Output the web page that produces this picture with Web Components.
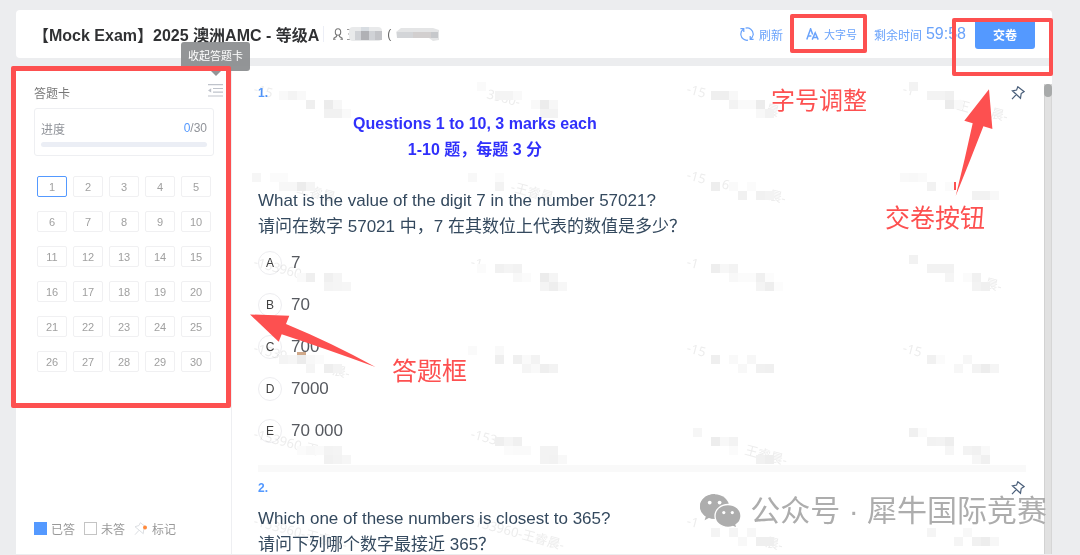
<!DOCTYPE html>
<html lang="zh-CN">
<head>
<meta charset="utf-8">
<title>Mock Exam</title>
<style>
    html, body {
        margin: 0;
        height: 100%;
    }

    body {
        position: relative;
        overflow: hidden;
        background-color: #ecedef;
        font-family: "Liberation Sans", "Noto Sans CJK SC", sans-serif;
        font-size: 12px;
        --blue: #5499ff;
        --red: #fd5050;
        --line: #eeeff2;
    }
</style>
</head>
<body>
<exam-app></exam-app>
<water-mark></water-mark>
<note-layer></note-layer>

<script>
class ExamHeader extends HTMLElement {
    constructor() {
        super()
        this.attachShadow({ mode: 'open' })
    }

    connectedCallback() {
        this.shadowRoot.innerHTML = `
            <style>
                :host {
                    display: flex;
                    align-items: center;
                    flex: none;
                    height: 48px;
                    padding: 0 17px;
                    box-sizing: border-box;
                    background-color: #fff;
                    border-radius: 4px;
                    white-space: nowrap;
                }

                h1 {
                    margin: 0;
                    font-size: 16px;
                    color: #303133;
                }

                .divider {
                    width: 1px;
                    height: 12px;
                    background-color: #e6e9f0;
                }

                .user {
                    display: flex;
                    align-items: center;
                    gap: 4px;
                    margin-left: 4px;
                    padding-left: 9px;
                    border-left: 1px solid #eceef6;
                    color: #666;
                }

                .tools {
                    display: flex;
                    align-items: center;
                    gap: 9px;
                    margin-left: auto;
                    color: #6aa3fb;
                }

                button {
                    display: flex;
                    align-items: center;
                    gap: 5px;
                    padding: 0;
                    border: none;
                    background: none;
                    color: inherit;
                    font: inherit;
                    cursor: pointer;
                }

                .size {
                    margin: 0 8px 0 4px;
                    font-size: 11px;
                }

                .time {
                    display: flex;
                    align-items: center;
                    gap: 4px;
                }

                .time b {
                    font-size: 16px;
                    font-weight: 400;
                }

                .submit {
                    justify-content: center;
                    width: 60px;
                    height: 30px;
                    border-radius: 3px;
                    background-color: var(--blue);
                    color: #fff;
                    font-weight: 700;
                }
            </style>
            <h1>【Mock Exam】2025 澳洲AMC - 等级A</h1>
            <div class="user">
                <svg width="10" height="12" viewBox="0 0 10 12" fill="none" stroke="#777" stroke-width="1.1">
                    <ellipse cx="5" cy="4" rx="2.7" ry="3.3"/>
                    <path d="M3.7 7.2 3.5 8.6 1 10V11.2M6.3 7.2 6.5 8.6 9 10V11.2M0 11.3H2.6M7.4 11.3H10"/>
                </svg>
                <svg width="36" height="14" viewBox="0 0 36 14">
                    <path d="M0 2.5H4M1 7H4M0 12.5H4" stroke="#999"/>
                    <rect x="2" width="33" height="14" rx="4" fill="#e9eaeb"/>
                    <path d="M14 4H22V13H14Z" fill="#b0b1b5"/>
                    <path d="M8 4H14V13H8ZM22 4H28V13H22Z" fill="#d0d2d6"/>
                    <path d="M28 4H35V13H28Z" fill="#c3c4c8"/>
                    <path d="M14 0H22V4H14Z" fill="#d8dde2"/>
                </svg>
                <span>(</span>
                <svg width="46" height="16" viewBox="0 0 46 16">
                    <path d="M6 2H38L44 4V14L38 15 34 12H2L1 6Z" fill="#e4e5e6"/>
                    <path d="M2 6H18V12H2Z" fill="#d3d5d8"/>
                    <path d="M18 6H36V12H18Z" fill="#d2cfcf"/>
                    <path d="M36 6H43V12H36Z" fill="#c6c8cb"/>
                </svg>
            </div>
            <div class="tools">
                <button>
                    <svg width="14" height="14" viewBox="0 0 14 14" fill="none" stroke="currentColor" stroke-width="1.2">
                        <path d="M.4 1.7H3.8V5M.9 8A6.2 6.2 0 0 1 3.6 2"/>
                        <path d="M5.600 1.100A6.200 6.200 0 0 1 13.200 7V8"/>
                        <path d="M.9 8A6.200 6.200 0 0 0 8 13.200"/>
                        <path d="M13.600 12.300H10.200V9M10.400 12A6.200 6.200 0 0 0 13.100 8"/>
                    </svg>
                    刷新
                </button>
                <span class="divider"></span>
                <button class="size">
                    <svg width="13" height="12" viewBox="0 0 13 12" fill="none" stroke="currentColor" stroke-width="1.500">
                        <path d="M.8 11.600 4.600.8 6.700 6.400M2.200 8H5.400"/>
                        <path d="M6.200 11.600 9.200 4.800 12.200 11.600M7.400 9.500H11"/>
                    </svg>
                    大字号
                </button>
                <div class="time">剩余时间 <b>59:58</b></div>
                <button class="submit">交卷</button>
            </div>
        `
    }
}

class AnswerCard extends HTMLElement {
    constructor() {
        super()
        this.attachShadow({ mode: 'open' })
    }

    connectedCallback() {
        this.#render()
    }

    #cells() {
        let html = ''
        for (let i = 1; i <= 30; i++) {
            html += `<button${i === 1 ? ' class="current"' : ''}>${i}</button>`
        }
        return html
    }

    #render() {
        this.shadowRoot.innerHTML = `
            <style>
                :host {
                    display: flex;
                    flex-direction: column;
                    flex: none;
                    width: 216px;
                    padding: 14px 17px 17px 18px;
                    box-sizing: border-box;
                    border-right: 1px solid var(--line);
                    color: #909399;
                }

                header, .count, footer, footer span {
                    display: flex;
                    align-items: center;
                }

                header, .count {
                    justify-content: space-between;
                }

                header {
                    position: relative;
                    height: 24px;
                    margin-right: -9px;
                }

                h2 {
                    margin: 0;
                    font-size: 12px;
                    font-weight: 400;
                    color: #777;
                }

                button {
                    padding: 0;
                    border: none;
                    background: none;
                    font: inherit;
                    cursor: pointer;
                }

                header button {
                    display: flex;
                    margin-bottom: 4px;
                }

                .tip {
                    position: absolute;
                    right: -27px;
                    bottom: 33px;
                    padding: 0 7px;
                    border-radius: 3px;
                    background-color: rgba(138, 140, 142, .92);
                    color: #fff;
                    font-size: 11px;
                    line-height: 29px;
                    white-space: nowrap;
                }

                .tip::after {
                    content: "";
                    position: absolute;
                    top: 100%;
                    left: 50%;
                    margin-left: -5px;
                    border: 5px solid transparent;
                    border-top-color: rgba(138, 140, 142, .92);
                    border-bottom: none;
                }

                .progress {
                    margin-top: 4px;
                    height: 48px;
                    padding: 10px 6px 0;
                    box-sizing: border-box;
                    border: 1px solid var(--line);
                    border-radius: 3px;
                }

                .count {
                    height: 18px;
                }

                .count b {
                    font-weight: 400;
                    color: var(--blue);
                }

                .bar {
                    height: 5px;
                    margin-top: 5px;
                    border-radius: 3px;
                    background-color: #ebeef5;
                }

                .grid {
                    display: grid;
                    grid-template-columns: repeat(5, 30px);
                    justify-content: space-between;
                    row-gap: 14px;
                    margin: 20px 3px 0;
                }

                .grid button {
                    height: 21px;
                    border: 1px solid #f0f0f2;
                    border-radius: 2px;
                    color: #a0a0a0;
                    font-size: 11px;
                }

                .grid .current {
                    border-color: var(--blue);
                }

                footer {
                    gap: 9px;
                    margin-top: auto;
                    color: #999;
                }

                footer span {
                    gap: 4px;
                }

                i {
                    width: 13px;
                    height: 13px;
                    box-sizing: border-box;
                    border: 1px solid #c4c4c4;
                }

                .done {
                    border-color: var(--blue);
                    background-color: var(--blue);
                }
            </style>
            <header>
                <h2>答题卡</h2>
                <button aria-label="收起答题卡">
                    <svg width="15" height="13" viewBox="0 0 15 13" stroke="#bfc3cb" stroke-width="1.2">
                        <path d="M0 .7H15M5 4.5H15M5 8.2H15M0 12H15"/>
                        <path d="M0 6.4 3.2 4.2V8.6Z" fill="#bfc3cb" stroke="none"/>
                    </svg>
                </button>
                <div class="tip">收起答题卡</div>
            </header>
            <div class="progress">
                <div class="count"><span>进度</span><span><b>0</b>/30</span></div>
                <div class="bar"></div>
            </div>
            <div class="grid">${this.#cells()}</div>
            <footer>
                <span><i class="done"></i>已答</span>
                <span><i></i>未答</span>
                <span>
                    <svg width="14" height="14" viewBox="0 0 14 14" fill="none" stroke="#dcdfe3">
                        <path d="M6.3.7 12.3 5.3 9.7 7.3 9.3 11.7 1 4.7 5 3.5ZM5 8.3 1 12.7"/>
                        <circle cx="11" cy="5.5" r="2" fill="#ff8a3c" stroke="none"/>
                    </svg>
                    标记
                </span>
            </footer>
        `
    }
}

class ExamQuestion extends HTMLElement {
    constructor() {
        super()
        this.attachShadow({ mode: 'open' })
    }

    connectedCallback() {
        this.shadowRoot.innerHTML = `
            <style>
                :host {
                    display: block;
                    padding: 4px 0 22px;
                    border-bottom: 7px solid #f9f9f9;
                }

                header {
                    display: flex;
                    align-items: center;
                    justify-content: space-between;
                    height: 24px;
                    margin-bottom: 6px;
                    padding-right: 1px;
                    color: var(--blue);
                    font-weight: 700;
                }

                button {
                    display: flex;
                    padding: 0;
                    border: none;
                    background: none;
                    cursor: pointer;
                }

                .stem {
                    width: fit-content;
                    color: #34495e;
                    font-size: 17px;
                    line-height: 26px;
                }

                ::slotted([slot="heading"]) {
                    display: block;
                    margin: 0 0 25px 6px;
                    color: #3030fb;
                    font-size: 16px;
                    font-weight: 700;
                    text-align: center;
                }
            </style>
            <header>
                <span>${this.getAttribute('no')}.</span>
                <button aria-label="标记">
                    <svg width="14" height="14" viewBox="0 0 14 14" fill="none" stroke="#4a5f7a" stroke-width="1.2">
                        <path d="M6.8.8 13 5.600 10.200 7.500 9.500 12.200 1.400 4.800 5.600 4ZM5.200 8.600 1 13.200"/>
                    </svg>
                </button>
            </header>
            <div class="stem">
                <slot name="heading"></slot>
                <slot></slot>
            </div>
            <slot name="options"></slot>
        `
    }
}

class ExamOption extends HTMLElement {
    constructor() {
        super()
        this.attachShadow({ mode: 'open' })
    }

    connectedCallback() {
        this.shadowRoot.innerHTML = `
            <style>
                :host {
                    display: block;
                }

                label {
                    display: flex;
                    align-items: center;
                    gap: 9px;
                    height: 24px;
                    color: #56595f;
                    font-size: 17px;
                    cursor: pointer;
                }

                .mark {
                    display: grid;
                    place-items: center;
                    width: 24px;
                    height: 24px;
                    box-sizing: border-box;
                    border: 1px solid #ededf0;
                    border-radius: 50%;
                    color: #404040;
                    font-size: 12px;
                }

                input {
                    appearance: none;
                    width: 22px;
                    height: 22px;
                    margin: 0;
                    grid-area: 1 / 1;
                    border-radius: 50%;
                }

                .mark span {
                    grid-area: 1 / 1;
                }
            </style>
            <label>
                <span class="mark"><input type="radio" name="answer"><span>${this.getAttribute('letter')}</span></span>
                <slot></slot>
            </label>
        `
    }
}

class ExamApp extends HTMLElement {
    constructor() {
        super()
        this.attachShadow({ mode: 'open' })
    }

    connectedCallback() {
        this.shadowRoot.innerHTML = `
            <style>
                :host {
                    display: flex;
                    flex-direction: column;
                    gap: 8px;
                    height: 100vh;
                    padding: 10px 28px 1px 16px;
                    box-sizing: border-box;
                }

                main {
                    display: flex;
                    flex: 1;
                    min-height: 0;
                    background-color: #fff;
                    border-radius: 4px 4px 0 0;
                }

                .list {
                    flex: 1;
                    padding: 11px 18px 0 26px;
                    overflow: hidden;
                }

                .options {
                    display: grid;
                    gap: 18px;
                    margin-top: 11px;
                }

                .track {
                    flex: none;
                    width: 8px;
                    margin-top: 18px;
                    background-color: #e1e1e1;
                    box-shadow: inset 1px 0 #d2d2d2, inset -1px 0 #d6d6d6;
                }

                .thumb {
                    height: 13px;
                    border-radius: 4px;
                    background-color: #a8aaaa;
                }

            </style>
            <exam-header></exam-header>
            <main>
                <answer-card></answer-card>
                <section class="list">
                    <exam-question no="1">
                        <div slot="heading">Questions 1 to 10, 3 marks each<br>1-10 题，每题 3 分</div>
                        What is the value of the digit 7 in the number 57021?<br>
                        请问在数字 57021 中，7 在其数位上代表的数值是多少？
                        <div class="options" slot="options">
                            <exam-option letter="A">7</exam-option>
                            <exam-option letter="B">70</exam-option>
                            <exam-option letter="C">700</exam-option>
                            <exam-option letter="D">7000</exam-option>
                            <exam-option letter="E">70 000</exam-option>
                        </div>
                    </exam-question>
                    <exam-question no="2">
                        Which one of these numbers is closest to 365?<br>
                        请问下列哪个数字最接近 365？
                    </exam-question>
                </section>
                <div class="track"><div class="thumb"></div></div>
            </main>
        `
    }
}

// x, y, grey level of each masked block
const BLOCKS = [
    [279, 91, 249], [288, 91, 244], [297, 91, 249], [306, 100, 239], [324, 100, 236], [333, 100, 247],
    [324, 109, 241], [333, 109, 241], [342, 109, 249],
    [477, 82, 250], [495, 91, 244], [504, 91, 244], [513, 91, 249], [531, 100, 249], [540, 100, 236],
    [549, 100, 247], [540, 109, 243], [549, 109, 243],
    [711, 91, 239], [720, 91, 239], [729, 91, 248], [729, 100, 243], [738, 100, 250], [747, 100, 250],
    [756, 100, 236], [756, 109, 248], [765, 109, 242],
    [909, 82, 243], [927, 91, 243], [936, 91, 243], [945, 91, 240], [945, 100, 235], [954, 100, 249],
    [252, 173, 246], [270, 173, 251], [279, 173, 251], [279, 182, 247], [288, 182, 247], [297, 182, 236], [306, 182, 245],
    [468, 173, 248], [495, 173, 251], [495, 182, 243],
    [711, 182, 238], [729, 182, 250], [747, 182, 251], [738, 191, 241], [756, 191, 241], [765, 191, 243],
    [900, 173, 249], [909, 173, 248], [918, 173, 250], [927, 182, 242], [945, 182, 251],
    [972, 191, 242], [981, 191, 242], [990, 191, 248],
    [297, 273, 250], [306, 273, 239], [324, 273, 240], [333, 273, 245], [324, 282, 244], [333, 282, 245], [342, 282, 246],
    [477, 264, 251], [495, 264, 241], [504, 264, 244], [513, 264, 242], [513, 273, 248], [522, 273, 251],
    [540, 273, 236], [549, 273, 245], [540, 282, 244], [549, 282, 238], [558, 282, 247],
    [711, 264, 238], [720, 264, 247], [729, 264, 243], [729, 273, 248], [738, 273, 251], [747, 273, 251],
    [756, 273, 240], [765, 273, 252], [756, 282, 244], [765, 282, 238], [774, 282, 252],
    [909, 255, 242], [927, 264, 242], [936, 264, 242], [945, 264, 242], [945, 273, 245], [963, 273, 251],
    [972, 273, 241], [972, 282, 243], [981, 282, 240],
    [279, 355, 244], [288, 355, 246], [297, 355, 236], [306, 355, 248], [315, 355, 251], [306, 364, 245],
    [324, 364, 238], [333, 364, 243],
    [468, 346, 250], [495, 346, 249], [495, 355, 239], [513, 355, 240], [522, 355, 250], [531, 355, 243],
    [522, 364, 245], [531, 364, 249], [540, 364, 239], [549, 364, 243],
    [711, 355, 239], [729, 355, 249], [747, 355, 247], [738, 364, 248], [756, 364, 241], [765, 364, 240],
    [927, 355, 241], [936, 355, 251], [963, 355, 247], [954, 364, 247], [972, 364, 243], [981, 364, 237], [990, 364, 245],
    [297, 446, 251], [306, 446, 248], [315, 446, 250], [324, 446, 243], [333, 446, 244],
    [324, 455, 241], [333, 455, 243], [342, 455, 246],
    [495, 437, 239], [504, 437, 245], [513, 437, 240], [504, 446, 251], [513, 446, 250], [522, 446, 250],
    [540, 446, 243], [549, 446, 243], [540, 455, 243], [549, 455, 242], [558, 455, 248],
    [693, 428, 246], [711, 437, 237], [720, 437, 248], [729, 437, 243], [729, 446, 251], [756, 455, 241], [765, 455, 238],
    [909, 428, 240], [918, 428, 251], [927, 437, 242], [936, 437, 243], [945, 437, 238], [945, 446, 246],
    [963, 446, 243], [972, 446, 241], [981, 446, 249], [972, 455, 246], [981, 455, 240],
    [711, 528, 244], [729, 528, 245], [747, 528, 247], [738, 537, 248], [756, 537, 239], [765, 537, 239],
    [927, 528, 245], [963, 528, 248], [954, 537, 245], [972, 537, 241], [981, 537, 237], [990, 537, 247]
]

// x, baseline y and the part of the mark left readable
const MARKS = [
    [253, 93, '-15'], [486, 98, '3960-'], [686, 93, '-15'], [902, 93, '-1'], [956, 109, '王'], [990, 117, '晨-'], [765, 113, '晨'],
    [292, 191, '-王睿晨'], [510, 191, '-王睿晨'], [686, 179, '-15'], [721, 188, '6'], [768, 199, '晨-'],
    [253, 266, '-153960'], [470, 266, '-1'], [686, 266, '-1'], [984, 287, '晨-'],
    [253, 352, '-1539'], [332, 374, '晨-'], [686, 352, '-15'], [902, 352, '-15'],
    [253, 438, '-153960-王'], [470, 438, '-153'], [744, 454, '王睿晨-'],
    [253, 525, '-153960-王睿晨-'], [470, 525, '-153960-王睿晨-'], [686, 525, '-1'], [765, 546, '晨-']
]

class WaterMark extends HTMLElement {
    constructor() {
        super()
        this.attachShadow({ mode: 'open' })
    }

    connectedCallback() {
        const blocks = BLOCKS.map(([x, y, c]) => `<rect x="${x}" y="${y}" width="9" height="9" fill="rgb(${c},${c},${c})"/>`)
        const marks = MARKS.map(([x, y, t]) => `<text transform="translate(${x} ${y}) rotate(15)">${t}</text>`)
        this.shadowRoot.innerHTML = `
            <style>
                :host {
                    position: absolute;
                    inset: 0;
                    mix-blend-mode: multiply;
                    pointer-events: none;
                }

                svg {
                    width: 100%;
                    height: 100%;
                }

                text {
                    font-family: "Noto Sans", "Noto Sans CJK SC", sans-serif;
                    font-size: 13px;
                    fill: #ededed;
                }
            </style>
            <svg aria-hidden="true">
                ${marks.join('')}
                ${blocks.join('')}
                <rect x="297" y="352" width="9" height="3" fill="#d0a98a"/>
            </svg>
        `
    }
}

class NoteLayer extends HTMLElement {
    constructor() {
        super()
        this.attachShadow({ mode: 'open' })
    }

    connectedCallback() {
        this.shadowRoot.innerHTML = `
            <style>
                :host {
                    position: absolute;
                    inset: 0;
                    pointer-events: none;
                    color: var(--red);
                    font-family: "Noto Sans CJK SC", sans-serif;
                    font-size: 25px;
                    line-height: 30px;
                    white-space: nowrap;
                }

                div, p, svg {
                    position: absolute;
                    margin: 0;
                }

                .frame {
                    box-sizing: border-box;
                    border: 4px solid var(--red);
                    border-radius: 2px;
                }

                .card { left: 11px; top: 66px; width: 220px; height: 342px; border-width: 5px; }
                .font { right: 213px; top: 14px; width: 77px; height: 39px; }
                .hand { right: 27px; top: 18px; width: 101px; height: 58px; }

                .card-text { left: 392px; top: 354px; }
                .font-text { right: 213px; top: 84px; font-size: 24px; }
                .hand-text { right: 95px; top: 201px; }

                .card-arrow { left: 250px; top: 314px; }
                .hand-arrow { right: 87px; top: 89px; }

                .brand {
                    display: flex;
                    align-items: center;
                    gap: 9px;
                    right: 33px;
                    bottom: 24px;
                    color: #adadad;
                    font-family: "Liberation Sans", "Noto Sans CJK SC", sans-serif;
                    font-size: 30px;
                    line-height: 40px;
                }

                .brand svg {
                    position: static;
                }
            </style>
            <div class="frame card"></div>
            <div class="frame font"></div>
            <div class="frame hand"></div>
            <svg class="card-arrow" width="126" height="54" viewBox="0 0 126 54" fill="#fd5050">
                <path d="M0 .5 39.3 1.7 36 10Q82 29 125.5 53 76 35 31.7 20.3L28.7 27.7Z"/>
            </svg>
            <svg class="hand-arrow" width="40" height="108" viewBox="0 0 40 108" fill="#fd5050">
                <path d="M36 .3 39.4 40 30.4 37.3Q17 72 2.7 107 12 70 19.7 34.3L11.3 31.7Z"/>
                <path d="M1 93H3V101H1Z"/>
            </svg>
            <p class="card-text">答题框</p>
            <p class="font-text">字号调整</p>
            <p class="hand-text">交卷按钮</p>
            <div class="brand">
                <svg width="41" height="34" viewBox="0 0 41 34" fill="#adadad">
                    <path d="M15 0C6.500 0 0 5.500 0 12.500 0 16.600 2.300 20.100 5.800 22.400L4.600 26.200 9.300 23.800C11.200 24.400 13 24.800 15 24.800Z"/>
                    <ellipse cx="14.500" cy="12.500" rx="14.500" ry="12.300"/>
                    <path d="M28 10.500C20.600 10.500 15 15.700 15 22 15 28.400 20.600 33.300 28 33.300 29.700 33.300 31.300 33 32.800 32.500L37 34 36 30.800C39 28.800 41 25.700 41 22 41 15.700 35.400 10.500 28 10.500Z" stroke="#fff" stroke-width="1.300"/>
                    <g fill="#fff">
                        <circle cx="9.700" cy="8.600" r="1.900"/>
                        <circle cx="19.600" cy="8.600" r="1.900"/>
                        <circle cx="23.800" cy="18.600" r="1.600"/>
                        <circle cx="32.300" cy="18.600" r="1.600"/>
                    </g>
                </svg>
                <span>公众号 · 犀牛国际竞赛</span>
            </div>
        `
    }
}

customElements.define('exam-header', ExamHeader)
customElements.define('answer-card', AnswerCard)
customElements.define('exam-question', ExamQuestion)
customElements.define('exam-option', ExamOption)
customElements.define('exam-app', ExamApp)
customElements.define('water-mark', WaterMark)
customElements.define('note-layer', NoteLayer)
</script>
</body>
</html>
